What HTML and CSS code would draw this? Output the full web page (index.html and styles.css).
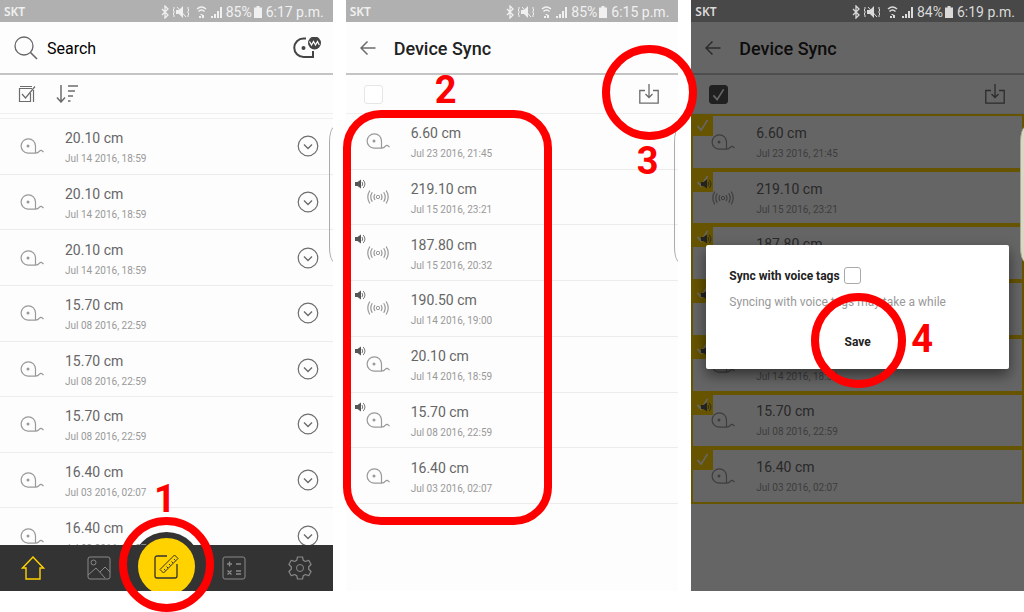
FILE: index.html
```
<!DOCTYPE html>
<html lang="en">
<head>
    <meta charset="UTF-8">
    <meta name="viewport" content="width=device-width, initial-scale=1.0">
    <title>Device Sync</title>
    <link rel="stylesheet" href="styles.css">
</head>
<body>
    <!-- icons -->
    <svg class="sprite" aria-hidden="true">
        <symbol id="status-icons" viewBox="0 0 61 14">
            <path d="M1 4l6 6-3 3V1l3 3-6 6" fill="none" stroke="currentColor" stroke-width="1.3"/>
            <path d="M15 5h3l4-4v12l-4-4h-3z" fill="currentColor"/>
            <path d="M16 2l9 10M13 2v2l-1 1 1 1v2l-1 1 1 1v2M27 2v2l1 1-1 1v2l1 1-1 1v2" fill="none" stroke="currentColor"/>
            <path d="M36 4q4.500-4 9 0M37.500 6.500q3-3 6 0" fill="none" stroke="currentColor" stroke-width="1.500"/>
            <path d="M39 9h3l-1.500 1.500zM38 11h2v2h-2zM41 10h2v3h-2z" fill="currentColor"/>
            <path d="M50 13v-2h2v2zM53 13V9h2v4zM56 13V6h2v7zM59 13V2h2v11z" fill="currentColor"/>
        </symbol>
        <symbol id="battery" viewBox="0 0 8 12">
            <path d="M2.500 0h3v1.500H8V12H0V1.500h2.500z" fill="currentColor"/>
        </symbol>
        <symbol id="search" viewBox="0 0 24 24">
            <circle cx="10" cy="10" r="9" stroke-width="1.300"/>
            <path d="M16.500 16.500L23 23" stroke-width="1.600"/>
        </symbol>
        <symbol id="tape-link" viewBox="0 0 28 22">
            <path d="M13 1.500h-2.500a9.200 9.200 0 0 0 0 18.500H20v-6" stroke-width="2"/>
            <circle cx="10.500" cy="11" r="2" fill="currentColor" stroke="none"/>
            <circle cx="21.500" cy="6" r="6.500" fill="currentColor" stroke="none"/>
            <path d="M16.500 4.500l2 3.500 2-3.500 2 3.500 2-3.500 1.800 3.500" stroke="#fff" stroke-width="1.200"/>
        </symbol>
        <symbol id="edit-list" viewBox="0 0 18 18">
            <path d="M14 3.500H1.500v13h11V8M2 1.500h12M15.500 5v12M4 9l3.500 4L17 1.500" stroke-width="1.200"/>
        </symbol>
        <symbol id="sort" viewBox="0 0 22 18">
            <path d="M5 0v17M1 12.500L5 17l4-4.500M12 1h10M12 6h7M12 11h5M12 16h2.500" stroke-width="1.500"/>
        </symbol>
        <symbol id="back" viewBox="0 0 16 14">
            <path d="M15.500 7H1M7.500 .500L1 7l6.500 6.500" stroke-width="1.500"/>
        </symbol>
        <symbol id="download" viewBox="0 0 20 20">
            <path d="M6 6.500H.800v12.700h18.400V6.500H14M10 0v13M6.500 10l3.500 3.500 3.500-3.500" stroke-width="1.300"/>
        </symbol>
        <symbol id="tape" viewBox="0 0 24 16">
            <path d="M15.500 15.200H8A7.200 7.200 0 1 1 15.500 8v7.200q2.500 0 4-2t4 1" stroke-width="1.200"/>
            <circle cx="8" cy="8" r="1.500" fill="currentColor" stroke="none"/>
        </symbol>
        <symbol id="sonar" viewBox="-1 -1 24 16">
            <circle cx="11" cy="7" r="1.700"/>
            <path d="M8 4q-2 3 0 6M5.300 2.300q-3 4.700 0 9.400M2.800 .500q-4 6.500 0 13M14 4q2 3 0 6M16.700 2.300q3 4.700 0 9.400M19.200 .500q4 6.500 0 13" stroke-width="1.200"/>
        </symbol>
        <symbol id="speaker" viewBox="0 0 11 10">
            <path d="M0 3h2.500L6 .500v9L2.500 7H0z" fill="currentColor" stroke="none"/>
            <path d="M7 3q1.500 2 0 4M8.200 1q3.500 4 0 8" stroke-width=".800"/>
        </symbol>
        <symbol id="chevron" viewBox="0 0 22 22">
            <circle cx="11" cy="11" r="9.800" stroke-width="1.200"/>
            <path d="M7 9.500l4 4 4-4" stroke-width="1.400"/>
        </symbol>
        <symbol id="tick" viewBox="0 0 14 14">
            <path d="M1.500 8l4 4.500L12.500 1.500" stroke-width="1.800"/>
        </symbol>
        <symbol id="home" viewBox="0 0 24 24">
            <path d="M12 1L1.500 12H5v11h14V12h3.500z" stroke-width="1.400"/>
        </symbol>
        <symbol id="gallery" viewBox="0 0 24 24">
            <rect x="1" y="1" width="22" height="22" rx="2"/>
            <circle cx="6.500" cy="6.500" r="2.500"/>
            <path d="M1 19l8-7 9 10M13 16l5-5 5 5"/>
        </symbol>
        <symbol id="measure" viewBox="0 0 26 26">
            <path d="M14 3H4a2 2 0 0 0-2 2v18a2 2 0 0 0 2 2h18a2 2 0 0 0 2-2V11" stroke-width="1.300"/>
            <path d="M7 16.500L21.500 2l3.500 3.500L10.500 20zM11 16l1.500 1.500M13.500 13.500L15 15M16 11l1.500 1.500M18.500 8.500L20 10M21 6l1.500 1.500"/>
        </symbol>
        <symbol id="calc" viewBox="0 0 24 24">
            <rect x="1" y="1" width="22" height="22" rx="2"/>
            <path d="M5 8h5M7.500 5.500v5M14 8h5M5.500 14.500l4 4M9.500 14.500l-4 4M14 15h5M14 18h5" stroke-width="1.300"/>
        </symbol>
        <symbol id="gear" viewBox="0 0 24 24">
            <circle cx="12" cy="12" r="3.500"/>
            <path d="M9.500 1h5l.7 3.200 2.300 1.300 3.200-1.200 2.400 4.200-2.400 2.200v2.600l2.400 2.200-2.400 4.200-3.200-1.200-2.300 1.300-.7 3.200h-5l-.7-3.200-2.300-1.300-3.200 1.200L.900 15.500l2.400-2.200v-2.600L.900 8.500l2.400-4.200 3.200 1.200 2.300-1.300z" stroke-linejoin="round" stroke-width="1.200"/>
        </symbol>
    </svg>

    <main class="guide">
        <!-- step 1 -->
        <section class="step">
            <div class="phone">
                <div class="status">
                    <span class="carrier">SKT</span>
                    <svg class="status-icons"><use href="#status-icons"/></svg>
                    <span class="percent">85%</span>
                    <svg class="battery"><use href="#battery"/></svg>
                    <span>6:17 p.m.</span>
                </div>
                <header class="bar">
                    <label class="search" for="search-ip">
                        <svg class="icon search-icon"><use href="#search"/></svg>
                        <input type="search" id="search-ip" placeholder="Search" aria-label="Search">
                    </label>
                    <button type="button" class="icon-btn" aria-label="Connect"><svg class="icon link-icon"><use href="#tape-link"/></svg></button>
                </header>
                <div class="tools">
                    <button type="button" class="icon-btn" aria-label="Select"><svg class="icon edit-icon"><use href="#edit-list"/></svg></button>
                    <button type="button" class="icon-btn" aria-label="Sort"><svg class="icon sort-icon"><use href="#sort"/></svg></button>
                </div>
                <div class="list-area home-area">
                    <ul class="list home-list">
                        <li class="row">
                            <svg class="icon tape"><use href="#tape"/></svg>
                            <div class="info"><p class="size">20.10 cm</p><p class="date">Jul 14 2016, 18:59</p></div>
                            <button type="button" class="icon-btn more" aria-label="More"><svg class="icon chevron"><use href="#chevron"/></svg></button>
                        </li>
                        <li class="row">
                            <svg class="icon tape"><use href="#tape"/></svg>
                            <div class="info"><p class="size">20.10 cm</p><p class="date">Jul 14 2016, 18:59</p></div>
                            <button type="button" class="icon-btn more" aria-label="More"><svg class="icon chevron"><use href="#chevron"/></svg></button>
                        </li>
                        <li class="row">
                            <svg class="icon tape"><use href="#tape"/></svg>
                            <div class="info"><p class="size">20.10 cm</p><p class="date">Jul 14 2016, 18:59</p></div>
                            <button type="button" class="icon-btn more" aria-label="More"><svg class="icon chevron"><use href="#chevron"/></svg></button>
                        </li>
                        <li class="row">
                            <svg class="icon tape"><use href="#tape"/></svg>
                            <div class="info"><p class="size">15.70 cm</p><p class="date">Jul 08 2016, 22:59</p></div>
                            <button type="button" class="icon-btn more" aria-label="More"><svg class="icon chevron"><use href="#chevron"/></svg></button>
                        </li>
                        <li class="row">
                            <svg class="icon tape"><use href="#tape"/></svg>
                            <div class="info"><p class="size">15.70 cm</p><p class="date">Jul 08 2016, 22:59</p></div>
                            <button type="button" class="icon-btn more" aria-label="More"><svg class="icon chevron"><use href="#chevron"/></svg></button>
                        </li>
                        <li class="row">
                            <svg class="icon tape"><use href="#tape"/></svg>
                            <div class="info"><p class="size">15.70 cm</p><p class="date">Jul 08 2016, 22:59</p></div>
                            <button type="button" class="icon-btn more" aria-label="More"><svg class="icon chevron"><use href="#chevron"/></svg></button>
                        </li>
                        <li class="row">
                            <svg class="icon tape"><use href="#tape"/></svg>
                            <div class="info"><p class="size">16.40 cm</p><p class="date">Jul 03 2016, 02:07</p></div>
                            <button type="button" class="icon-btn more" aria-label="More"><svg class="icon chevron"><use href="#chevron"/></svg></button>
                        </li>
                        <li class="row">
                            <svg class="icon tape"><use href="#tape"/></svg>
                            <div class="info"><p class="size">16.40 cm</p><p class="date">Jul 03 2016, 02:07</p></div>
                            <button type="button" class="icon-btn more" aria-label="More"><svg class="icon chevron"><use href="#chevron"/></svg></button>
                        </li>
                    </ul>
                </div>
                <nav class="nav">
                    <a href="#" class="active" aria-label="Home"><svg class="icon nav-icon"><use href="#home"/></svg></a>
                    <a href="#" aria-label="Gallery"><svg class="icon nav-icon"><use href="#gallery"/></svg></a>
                    <a href="#" class="measure" aria-label="Measure"><svg class="icon nav-icon"><use href="#measure"/></svg></a>
                    <a href="#" aria-label="Calculator"><svg class="icon nav-icon"><use href="#calc"/></svg></a>
                    <a href="#" aria-label="Settings"><svg class="icon nav-icon"><use href="#gear"/></svg></a>
                </nav>
                <div class="edge"></div>
            </div>
            <span class="ring ring-1"></span>
            <span class="num num-1">1</span>
        </section>

        <!-- steps 2 and 3 -->
        <section class="step">
            <div class="phone">
                <div class="status">
                    <span class="carrier">SKT</span>
                    <svg class="status-icons"><use href="#status-icons"/></svg>
                    <span class="percent">85%</span>
                    <svg class="battery"><use href="#battery"/></svg>
                    <span>6:15 p.m.</span>
                </div>
                <header class="bar">
                    <button type="button" class="icon-btn" aria-label="Back"><svg class="icon back-icon"><use href="#back"/></svg></button>
                    <h1 class="title">Device Sync</h1>
                </header>
                <div class="tools">
                    <input type="checkbox" class="check-all" aria-label="Select all">
                    <button type="button" class="icon-btn save-btn" aria-label="Download"><svg class="icon download-icon"><use href="#download"/></svg></button>
                </div>
                <div class="list-area">
                    <ul class="list">
                        <li class="row">
                            <svg class="icon tape"><use href="#tape"/></svg>
                            <div class="info"><p class="size">6.60 cm</p><p class="date">Jul 23 2016, 21:45</p></div>
                        </li>
                        <li class="row">
                            <svg class="icon voice"><use href="#speaker"/></svg>
                            <svg class="icon tape"><use href="#sonar"/></svg>
                            <div class="info"><p class="size">219.10 cm</p><p class="date">Jul 15 2016, 23:21</p></div>
                        </li>
                        <li class="row">
                            <svg class="icon voice"><use href="#speaker"/></svg>
                            <svg class="icon tape"><use href="#sonar"/></svg>
                            <div class="info"><p class="size">187.80 cm</p><p class="date">Jul 15 2016, 20:32</p></div>
                        </li>
                        <li class="row">
                            <svg class="icon voice"><use href="#speaker"/></svg>
                            <svg class="icon tape"><use href="#sonar"/></svg>
                            <div class="info"><p class="size">190.50 cm</p><p class="date">Jul 14 2016, 19:00</p></div>
                        </li>
                        <li class="row">
                            <svg class="icon voice"><use href="#speaker"/></svg>
                            <svg class="icon tape"><use href="#tape"/></svg>
                            <div class="info"><p class="size">20.10 cm</p><p class="date">Jul 14 2016, 18:59</p></div>
                        </li>
                        <li class="row">
                            <svg class="icon voice"><use href="#speaker"/></svg>
                            <svg class="icon tape"><use href="#tape"/></svg>
                            <div class="info"><p class="size">15.70 cm</p><p class="date">Jul 08 2016, 22:59</p></div>
                        </li>
                        <li class="row">
                            <svg class="icon tape"><use href="#tape"/></svg>
                            <div class="info"><p class="size">16.40 cm</p><p class="date">Jul 03 2016, 02:07</p></div>
                        </li>
                    </ul>
                </div>
                <div class="edge"></div>
            </div>
            <span class="ring ring-2"></span>
            <span class="num num-2">2</span>
            <span class="ring ring-3"></span>
            <span class="num num-3">3</span>
        </section>

        <!-- step 4 -->
        <section class="step">
            <div class="phone">
                <div class="status dark">
                    <span class="carrier">SKT</span>
                    <svg class="status-icons"><use href="#status-icons"/></svg>
                    <span class="percent">84%</span>
                    <svg class="battery"><use href="#battery"/></svg>
                    <span>6:19 p.m.</span>
                </div>
                <header class="bar">
                    <button type="button" class="icon-btn" aria-label="Back"><svg class="icon back-icon"><use href="#back"/></svg></button>
                    <h1 class="title">Device Sync</h1>
                </header>
                <div class="tools">
                    <input type="checkbox" class="check-all" aria-label="Select all" checked>
                    <svg class="icon all-tick"><use href="#tick"/></svg>
                    <button type="button" class="icon-btn save-btn" aria-label="Download"><svg class="icon download-icon"><use href="#download"/></svg></button>
                </div>
                <div class="list-area">
                    <ul class="list">
                        <li class="row selected">
                            <span class="tag"><svg class="icon tick"><use href="#tick"/></svg></span>
                            <svg class="icon tape"><use href="#tape"/></svg>
                            <div class="info"><p class="size">6.60 cm</p><p class="date">Jul 23 2016, 21:45</p></div>
                        </li>
                        <li class="row selected">
                            <span class="tag"><svg class="icon tick"><use href="#tick"/></svg></span>
                            <svg class="icon voice"><use href="#speaker"/></svg>
                            <svg class="icon tape"><use href="#sonar"/></svg>
                            <div class="info"><p class="size">219.10 cm</p><p class="date">Jul 15 2016, 23:21</p></div>
                        </li>
                        <li class="row selected">
                            <span class="tag"><svg class="icon tick"><use href="#tick"/></svg></span>
                            <svg class="icon voice"><use href="#speaker"/></svg>
                            <svg class="icon tape"><use href="#sonar"/></svg>
                            <div class="info"><p class="size">187.80 cm</p><p class="date">Jul 15 2016, 20:32</p></div>
                        </li>
                        <li class="row selected">
                            <span class="tag"><svg class="icon tick"><use href="#tick"/></svg></span>
                            <svg class="icon voice"><use href="#speaker"/></svg>
                            <svg class="icon tape"><use href="#sonar"/></svg>
                            <div class="info"><p class="size">190.50 cm</p><p class="date">Jul 14 2016, 19:00</p></div>
                        </li>
                        <li class="row selected">
                            <span class="tag"><svg class="icon tick"><use href="#tick"/></svg></span>
                            <svg class="icon voice"><use href="#speaker"/></svg>
                            <svg class="icon tape"><use href="#tape"/></svg>
                            <div class="info"><p class="size">20.10 cm</p><p class="date">Jul 14 2016, 18:59</p></div>
                        </li>
                        <li class="row selected">
                            <span class="tag"><svg class="icon tick"><use href="#tick"/></svg></span>
                            <svg class="icon voice"><use href="#speaker"/></svg>
                            <svg class="icon tape"><use href="#tape"/></svg>
                            <div class="info"><p class="size">15.70 cm</p><p class="date">Jul 08 2016, 22:59</p></div>
                        </li>
                        <li class="row selected">
                            <span class="tag"><svg class="icon tick"><use href="#tick"/></svg></span>
                            <svg class="icon tape"><use href="#tape"/></svg>
                            <div class="info"><p class="size">16.40 cm</p><p class="date">Jul 03 2016, 02:07</p></div>
                        </li>
                    </ul>
                </div>
                <div class="overlay">
                    <form class="dialog">
                        <div class="option">
                            <label for="voice-tags">Sync with voice tags</label>
                            <input type="checkbox" id="voice-tags">
                        </div>
                        <p class="hint">Syncing with voice tags may take a while</p>
                        <button type="button" class="save">Save</button>
                    </form>
                </div>
                <div class="edge edge-light"></div>
            </div>
            <span class="ring ring-4"></span>
            <span class="num num-4">4</span>
        </section>
    </main>
</body>
</html>
```

FILE: styles.css
```
* {
  margin: 0;
  padding: 0;
  box-sizing: border-box;
}

body {
  font-family: Roboto, "Liberation Sans", sans-serif;
  background-color: #fff;
}

.sprite {
  position: absolute;
  width: 0;
  height: 0;
}

.guide {
  display: grid;
  grid-template-columns: repeat(3, 1fr);
  gap: 13px;
  min-height: 100vh;
  align-items: start;
  overflow: hidden;
}

.step {
  position: relative;
}

.phone {
  position: relative;
  display: flex;
  flex-direction: column;
  aspect-ratio: 9 / 16;
  min-height: 0;
  overflow: hidden;
  background-color: #fdfdfd;
}

/* status bar */
.status {
  display: flex;
  align-items: center;
  flex-shrink: 0;
  height: 22px;
  padding: 2px 9px 0 4px;
  background-color: #b0b0b0;
  color: #f0f0f0;
  font-size: 14px;
  line-height: 20px;
}

.status.dark {
  background-color: #484848;
  color: #dadada;
}

.carrier {
  margin-right: auto;
  font-family: "Noto Sans", sans-serif;
  font-size: 12px;
  font-weight: 600;
}

.status-icons {
  width: 61px;
  height: 14px;
}

.percent {
  margin: 0 2px 0 4px;
}

.battery {
  width: 8px;
  height: 12px;
  margin-right: 4px;
}

/* title bar */
.bar {
  display: flex;
  align-items: center;
  flex-shrink: 0;
  height: 53px;
  padding: 0 12px 0 14px;
  border-bottom: 2px solid #c4c4c4;
}

.icon {
  display: block;
  fill: none;
  stroke: currentColor;
}

.icon-btn {
  display: block;
  border: none;
  background: none;
  color: #6c6c6c;
}

.search {
  display: flex;
  align-items: center;
  gap: 9px;
  flex: 1;
  color: #666;
}

.search-icon {
  width: 24px;
  height: 24px;
}

.search input {
  flex: 1;
  min-width: 0;
  padding-top: 2px;
  border: none;
  outline: none;
  background: none;
  font-family: inherit;
  font-size: 16px;
  font-weight: 400;
}

.search input::placeholder {
  color: #000;
}

.link-icon {
  width: 28px;
  height: 22px;
  color: #444;
}

.back-icon {
  width: 16px;
  height: 14px;
}

.title {
  margin-left: 18px;
  padding-top: 2px;
  color: #222;
  font-size: 18px;
  font-weight: 500;
}

/* toolbar */
.tools {
  position: relative;
  display: flex;
  align-items: center;
  flex-shrink: 0;
  gap: 20px;
  height: 39px;
  padding: 0 18px;
  border-bottom: 1px solid #efefef;
}

.edit-icon {
  width: 18px;
  height: 18px;
}

.sort-icon {
  width: 22px;
  height: 18px;
}

.check-all {
  appearance: none;
  width: 19px;
  height: 19px;
  border: 1px solid #e6e6e6;
  border-radius: 3px;
  background-color: #fff;
}

.check-all:checked {
  border-color: #505050;
  background-color: #505050;
}

.all-tick {
  position: absolute;
  left: 21px;
  width: 13px;
  height: 13px;
  color: #fff;
}

.save-btn {
  margin-left: auto;
}

.download-icon {
  width: 22px;
  height: 20px;
}

/* measurements */
.list-area {
  flex: 1;
  min-height: 0;
  overflow: hidden;
}

.home-area {
  padding-top: 4px;
}

.list {
  display: grid;
  grid-template-rows: repeat(7, 1fr);
  height: 390px;
  list-style: none;
}

.home-list {
  grid-template-rows: repeat(8, 1fr);
  height: 446px;
  border-top: 1px solid #efefef;
}

.row {
  position: relative;
  display: flex;
  align-items: center;
  padding: 0 14px 0 20px;
  border-bottom: 1px solid #ececec;
}

.tape {
  width: 24px;
  height: 16px;
  color: #999;
}

.info {
  flex: 1;
  margin-left: 21px;
  padding-top: 6px;
}

.size {
  color: #666;
  font-size: 14px;
  line-height: 20px;
}

.date {
  color: #999;
  font-size: 10px;
  line-height: 22px;
}

.chevron {
  width: 22px;
  height: 22px;
}

.voice {
  position: absolute;
  left: 9px;
  top: 9px;
  width: 11px;
  height: 10px;
  color: #555;
}

.selected {
  padding: 0 12px 0 18px;
  border: 2px solid #ffd200;
}

.selected .info {
  padding-top: 4px;
}

.selected .voice {
  left: 8px;
  top: 7px;
}

.tag {
  position: absolute;
  left: 0;
  top: 0;
  width: 20px;
  height: 20px;
  padding: 2px 3px;
  background-color: #ffd200;
}

.tick {
  width: 13px;
  height: 14px;
  color: #fff;
}

/* bottom navigation */
.nav {
  display: grid;
  grid-template-columns: repeat(5, 1fr);
  place-items: center;
  flex-shrink: 0;
  height: 46px;
  background-color: #333;
}

.nav a {
  color: #8a8a8a;
}

.nav .active {
  color: #ffd200;
}

.nav-icon {
  width: 24px;
  height: 24px;
}

.nav .measure {
  display: grid;
  place-items: center;
  width: 69px;
  height: 69px;
  margin: -16px 0 -12px;
  border: 6px solid #333;
  border-radius: 50%;
  background-color: #ffd200;
  color: #333;
}

.measure .nav-icon {
  width: 26px;
  height: 26px;
}

/* side handle */
.edge {
  position: absolute;
  top: 127px;
  right: -6px;
  width: 10px;
  height: 135px;
  border: 1px solid #aaa;
  border-radius: 6px / 18px;
}

.edge-light {
  border-color: #a9a795;
  background-color: #dad8c5;
}

/* dialog */
.overlay {
  position: absolute;
  top: 22px;
  right: 0;
  bottom: 0;
  left: 0;
  display: flex;
  align-items: center;
  padding: 0 15px;
  background-color: rgba(0, 0, 0, 0.6);
}

.dialog {
  flex: 1;
  padding: 18px 23px 14px;
  border-radius: 2px;
  background-color: #fff;
  box-shadow: 0 6px 14px rgba(0, 0, 0, 0.5);
  font-size: 12px;
}

.option {
  display: flex;
  align-items: center;
  gap: 4px;
  height: 26px;
  color: #222;
  font-weight: 700;
}

.option input {
  appearance: none;
  width: 17px;
  height: 17px;
  border: 1px solid #aaa;
  border-radius: 3px;
}

.hint {
  color: #999;
  line-height: 26px;
}

.save {
  display: block;
  margin: 14px auto 0;
  border: none;
  background: none;
  color: #222;
  font-family: inherit;
  font-size: 12px;
  font-weight: 700;
  line-height: 26px;
}

/* step marks */
.ring {
  position: absolute;
  z-index: 2;
  width: 95px;
  height: 95px;
  border: 8px solid #f00;
  border-radius: 50%;
  pointer-events: none;
}

.num {
  position: absolute;
  z-index: 2;
  color: #f00;
  font-size: 38px;
  font-weight: 700;
  line-height: 38px;
}

.ring-1 {
  left: 119px;
  top: 517px;
}

.ring-2 {
  left: -3px;
  top: 110px;
  width: 209px;
  height: 415px;
  border-radius: 38px;
}

.ring-3 {
  left: 256px;
  top: 45px;
}

.ring-4 {
  left: 120px;
  top: 293px;
}

.num-1 {
  left: 154px;
  top: 480px;
}

.num-2 {
  left: 89px;
  top: 71px;
}

.num-3 {
  left: 291px;
  top: 142px;
}

.num-4 {
  left: 220px;
  top: 320px;
}
```
